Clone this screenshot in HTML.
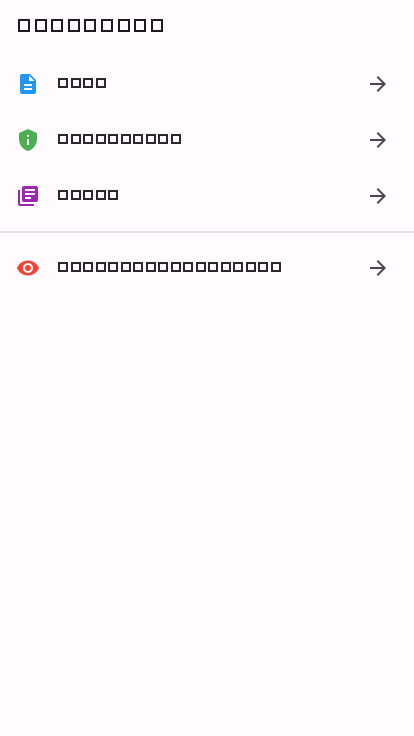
<!DOCTYPE html>
<html><head><meta charset="utf-8"><style>
body{margin:0;width:414px;height:736px;background:#fffbfe;position:relative;font-family:"Liberation Sans",sans-serif;overflow:hidden}
.t{position:absolute;left:18px;top:19px;display:flex;gap:4.6px}
.t i{width:8px;height:9px;border:2px solid #1c1b1f;display:block;flex:none}
.r{position:absolute;left:58px;display:flex;gap:2.5px}
.r i{width:6px;height:6px;border:2px solid #2a282d;display:block;flex:none}
.ic{position:absolute;left:16px;width:24px;height:24px}
.ar{position:absolute;left:366px;width:24px;height:24px}
.hr{position:absolute;left:0;top:231px;width:414px;height:2px;background:#e6e0e9}
</style></head><body>
<div class="t"><i></i><i></i><i></i><i></i><i></i><i></i><i></i><i></i><i></i></div>

<svg class="ic" style="top:72px" viewBox="0 0 24 24"><path fill="#2196f3" d="M14 2H6c-1.1 0-2 .9-2 2v16c0 1.1.9 2 2 2h12c1.1 0 2-.9 2-2V8l-6-6zm2 16H8v-2h8v2zm0-4H8v-2h8v2zm-3-5V3.5L18.5 9H13z"/></svg>
<div class="r" style="top:78px"><i></i><i></i><i></i><i></i></div>
<svg class="ar" style="top:72px" viewBox="0 0 24 24"><path fill="#49454f" d="M12 4l-1.41 1.41L16.17 11H4v2h12.17l-5.58 5.59L12 20l8-8z"/></svg>

<svg class="ic" style="top:128px" viewBox="0 0 24 24"><path fill="#4caf50" d="M12 1L3 5v6c0 5.55 3.84 10.74 9 12 5.16-1.26 9-6.45 9-12V5l-9-4zm1 16h-2v-6h2v6zm0-8h-2V7h2v2z"/></svg>
<div class="r" style="top:134px"><i></i><i></i><i></i><i></i><i></i><i></i><i></i><i></i><i></i><i></i></div>
<svg class="ar" style="top:128px" viewBox="0 0 24 24"><path fill="#49454f" d="M12 4l-1.41 1.41L16.17 11H4v2h12.17l-5.58 5.59L12 20l8-8z"/></svg>

<svg class="ic" style="top:184px" viewBox="0 0 24 24"><path fill="#9c27b0" d="M4 6H2v14c0 1.1.9 2 2 2h14v-2H4V6zm16-4H8c-1.1 0-2 .9-2 2v12c0 1.1.9 2 2 2h12c1.1 0 2-.9 2-2V4c0-1.1-.9-2-2-2zm-1 9H9V9h10v2zm-4 4H9v-2h6v2zm4-8H9V5h10v2z"/></svg>
<div class="r" style="top:190px"><i></i><i></i><i></i><i></i><i></i></div>
<svg class="ar" style="top:184px" viewBox="0 0 24 24"><path fill="#49454f" d="M12 4l-1.41 1.41L16.17 11H4v2h12.17l-5.58 5.59L12 20l8-8z"/></svg>

<div class="hr"></div>

<svg class="ic" style="top:256px" viewBox="0 0 24 24"><path fill="#f44336" d="M12 4.5C7 4.5 2.73 7.61 1 12c1.73 4.39 6 7.5 11 7.5s9.27-3.11 11-7.5c-1.73-4.39-6-7.5-11-7.5zM12 17c-2.76 0-5-2.24-5-5s2.24-5 5-5 5 2.24 5 5-2.24 5-5 5zm0-8c-1.66 0-3 1.34-3 3s1.34 3 3 3 3-1.34 3-3-1.34-3-3-3z"/></svg>
<div class="r" style="top:262px"><i></i><i></i><i></i><i></i><i></i><i></i><i></i><i></i><i></i><i></i><i></i><i></i><i></i><i></i><i></i><i></i><i></i><i></i></div>
<svg class="ar" style="top:256px" viewBox="0 0 24 24"><path fill="#49454f" d="M12 4l-1.41 1.41L16.17 11H4v2h12.17l-5.58 5.59L12 20l8-8z"/></svg>
</body></html>
